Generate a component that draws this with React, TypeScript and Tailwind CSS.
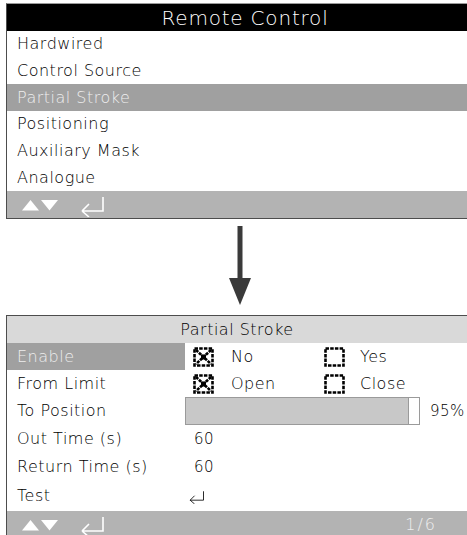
import React from 'react';

const font = { fontFamily: '"DejaVu Sans", "Liberation Sans", sans-serif' };

function CheckBox({ checked }: { checked: boolean }) {
   return (
      <svg width="21" height="20" viewBox="0 0 21 20" className="shrink-0">
         <rect x="1.5" y="1.5" width="18" height="17" fill="none" stroke="#000" strokeWidth="2.6" strokeDasharray="3.5 1.2" />
         {checked && (
            <>
               <path d="M3 3 L18 17 M18 3 L3 17" stroke="#000" strokeWidth="2.6" strokeDasharray="3 1" />
               <rect x="8" y="7.5" width="5" height="5" fill="#000" />
            </>
         )}
      </svg>
   );
}

function EnterIcon({ color = '#fff', w = 26, h = 22, stroke = 1.6 }: { color?: string; w?: number; h?: number; stroke?: number }) {
   return (
      <svg width={w} height={h} viewBox="0 0 26 22" fill="none">
         <path d="M24 2 V16 H3 M3 16 L10 9 M3 16 L10 22" stroke={color} strokeWidth={stroke} />
      </svg>
   );
}

function NavFooter({ page }: { page?: string }) {
   return (
      <div className="flex items-center h-[27px] bg-[#b3b3b3] pl-[15px] pr-[30px]">
         <svg width="38" height="11" viewBox="0 0 38 11" className="mt-[1px]">
            <polygon points="0,10.5 8.5,0 17,10.5" fill="#fff" />
            <polygon points="19,0 36,0 27.5,10.5" fill="#fff" />
         </svg>
         <div className="ml-[19px] mt-[2px]">
            <EnterIcon />
         </div>
         <div className="flex-1" />
         {page && <span className="text-[16px] font-extralight tracking-[2px] text-[#eeeeee]">{page}</span>}
      </div>
   );
}

const menu = ['Hardwired', 'Control Source', 'Partial Stroke', 'Positioning', 'Auxiliary Mask', 'Analogue'];

export default function App() {
   return (
      <div className="w-[467px] h-[535px] bg-white overflow-hidden pt-[3px] pl-[6px] tracking-[0.5px]" style={font}>
         {/* top menu screen */}
         <div className="border border-[#4d4d4d] border-r-0 border-t-[#9a9a9a]">
            <div className="h-[27px] bg-black text-white text-[20px] font-extralight flex items-center justify-center pl-[16px] tracking-[0.8px]">
               Remote Control
            </div>
            {menu.map((m, i) => (
               <div
                  key={m}
                  className={`h-[26.7px] flex items-center pl-[10px] text-[16px] font-extralight ${i === 2 ? 'bg-[#a0a0a0] text-[#eeeeee]' : 'text-black'}`}
               >
                  {m}
               </div>
            ))}
            <NavFooter />
         </div>

         {/* arrow between */}
         <div className="h-[96px] flex items-start justify-center pt-[7px] pl-[7px]">
            <svg width="22" height="79" viewBox="0 0 22 79">
               <rect x="8.5" y="0" width="5" height="54" fill="#3a3a3a" />
               <polygon points="0,52 22,52 11,79" fill="#3a3a3a" />
            </svg>
         </div>

         {/* partial stroke screen */}
         <div className="border border-[#4d4d4d] border-r-0 border-b-0 text-[16px] font-extralight text-black">
            <div className="h-[27px] bg-[#d9d9d9] flex items-center justify-center">Partial Stroke</div>
            <div className="h-[27px] flex items-center">
               <div className="w-[178px] h-full bg-[#a0a0a0] text-[#eeeeee] flex items-center pl-[10px]">Enable</div>
               <div className="ml-[8px] flex items-center w-[131px]">
                  <CheckBox checked />
                  <span className="ml-[17px]">No</span>
               </div>
               <CheckBox checked={false} />
               <span className="ml-[15px]">Yes</span>
            </div>
            <div className="h-[27px] flex items-center">
               <div className="w-[178px] pl-[10px]">From Limit</div>
               <div className="ml-[8px] flex items-center w-[131px]">
                  <CheckBox checked />
                  <span className="ml-[17px]">Open</span>
               </div>
               <CheckBox checked={false} />
               <span className="ml-[15px]">Close</span>
            </div>
            <div className="h-[28px] flex items-center">
               <div className="w-[178px] pl-[10px]">To Position</div>
               <div className="w-[235px] h-full bg-[#c8c8c8] border border-[#9a9a9a] flex justify-end">
                  <div className="w-[11px] h-full bg-white border-l border-[#9a9a9a]" />
               </div>
               <span className="ml-[10px] text-[15px]">95%</span>
            </div>
            <div className="h-[28px] flex items-center">
               <div className="w-[178px] pl-[10px]">Out Time (s)</div>
               <span className="ml-[9px] text-[15px]">60</span>
            </div>
            <div className="h-[28px] flex items-center">
               <div className="w-[178px] pl-[10px]">Return Time (s)</div>
               <span className="ml-[9px] text-[15px]">60</span>
            </div>
            <div className="h-[30px] flex items-center">
               <div className="w-[178px] pl-[10px]">Test</div>
               <div className="mt-[2px]">
                  <EnterIcon color="#000" w={23} h={14} stroke={1.3} />
               </div>
            </div>
            <NavFooter page="1/6" />
         </div>
      </div>
   );
}
